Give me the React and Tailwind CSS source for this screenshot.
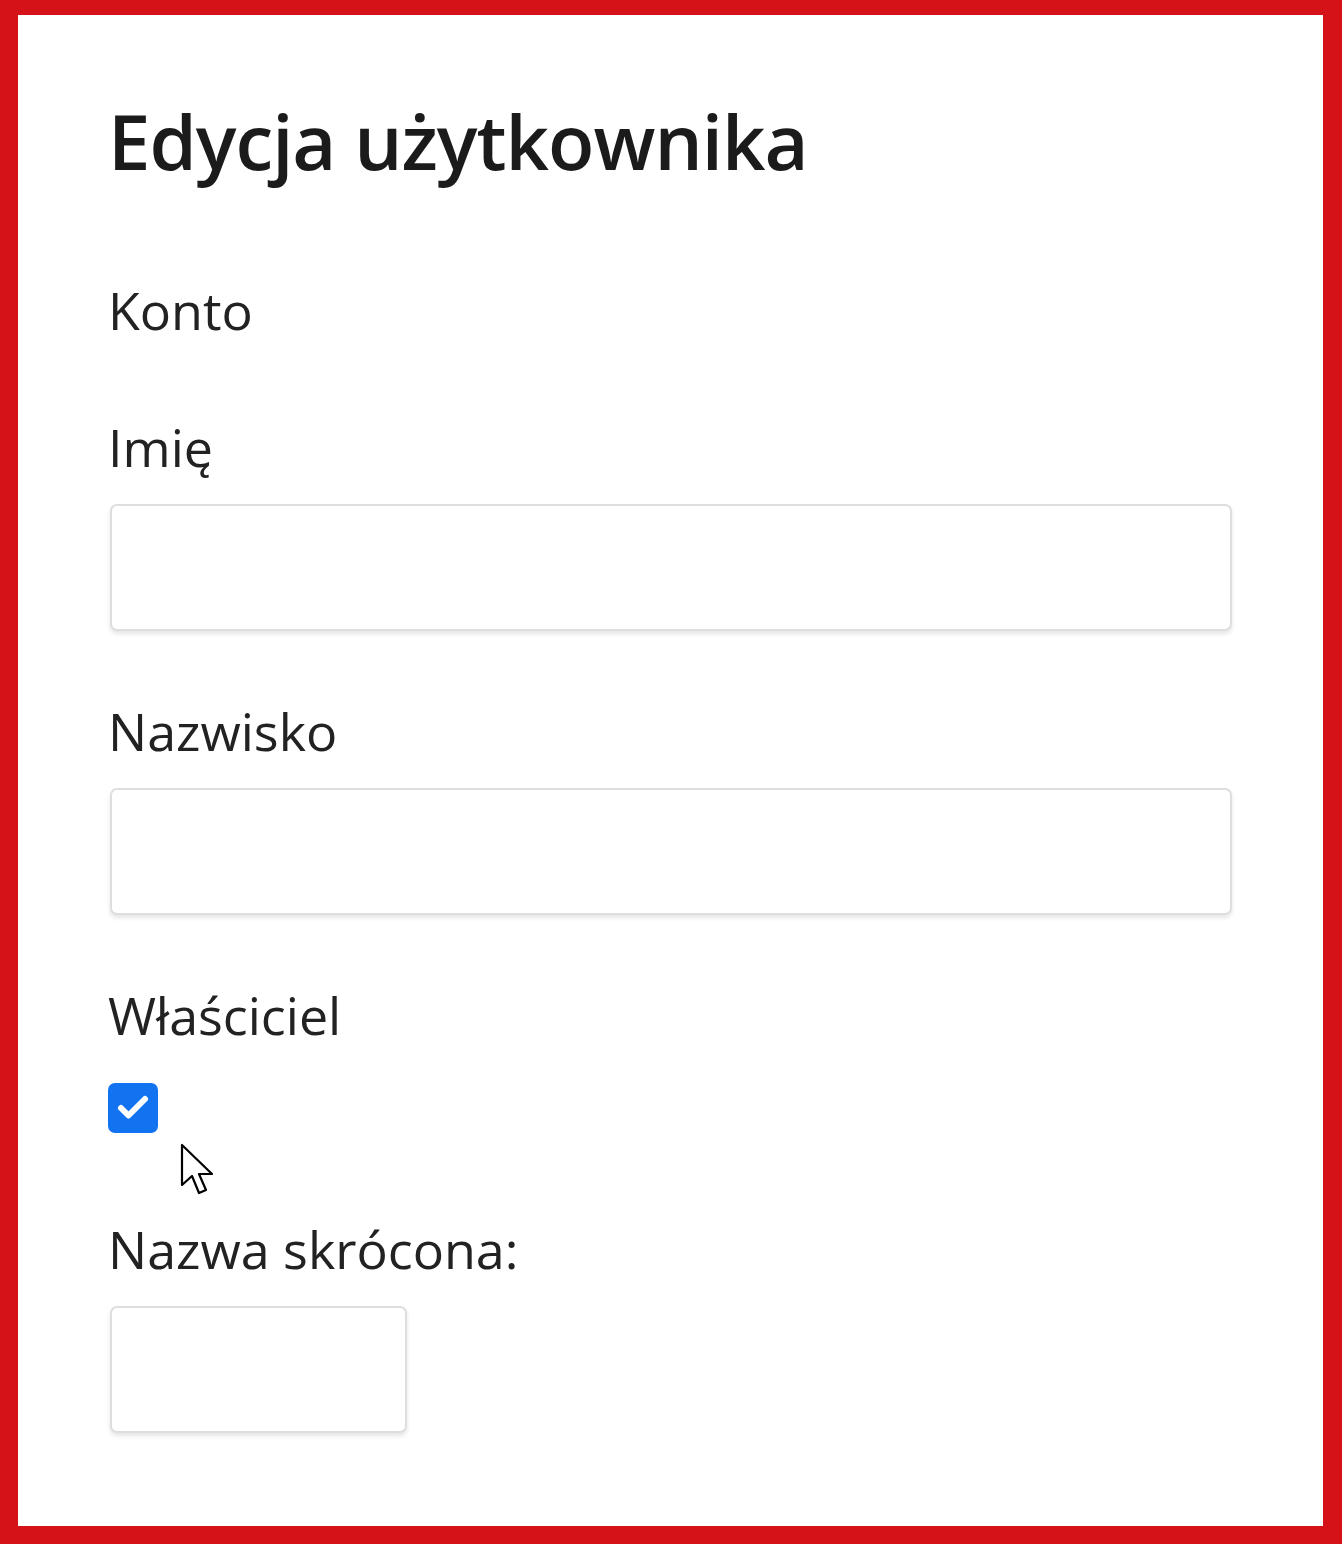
import { Check } from 'lucide-react';

function Field({ label, className = '', inputClass = 'w-[1122px]' }) {
  return (
    <div className={className}>
      <label className="block text-[52px] leading-none text-[#222]">{label}</label>
      <input
        type="text"
        className={`ml-[2px] mt-[31px] block h-[127px] ${inputClass} rounded-[7px] border-2 border-[#dedede] bg-white shadow-[0_3px_4px_rgba(0,0,0,0.10)] outline-none`}
      />
    </div>
  );
}

export default function App() {
  return (
    <div
      className="relative h-[1544px] w-[1342px] border-solid border-[#d51218] border-t-[15px] border-l-[18px] border-r-[19px] border-b-[18px] bg-white pl-[90px] pt-[88px]"
      style={{ fontFamily: '"Open Sans", "Noto Sans", sans-serif' }}
    >
      <h1 className="text-[76px] leading-none font-semibold tracking-[-1px] text-[#1b1b1b]">Edycja użytkownika</h1>

      <p className="mt-[105px] text-[52px] leading-none text-[#222]">Konto</p>

      <Field label="Imię" className="mt-[85px]" />
      <Field label="Nazwisko" className="mt-[74px]" />

      <div className="mt-[74px]">
        <label className="block text-[52px] leading-none text-[#222]">Właściciel</label>
        <div className="mt-[42px] flex h-[50px] w-[50px] items-center justify-center rounded-[7px] bg-[#1173f0]">
          <Check className="h-[36px] w-[36px] text-white" strokeWidth={4} />
        </div>
      </div>

      <Field label="Nazwa skrócona:" className="mt-[90px]" inputClass="w-[297px]" />

      {/* mouse pointer over the page */}
      <svg className="absolute left-[162px] top-[1128px]" width="38" height="56" viewBox="0 0 19 28">
        <path
          d="M1 1 L1 21 L6 16.5 L9.5 25 L13 23.5 L9.5 15.5 L16 15.5 Z"
          fill="white"
          stroke="black"
          strokeWidth="1.1"
          strokeLinejoin="round"
        />
      </svg>
    </div>
  );
}
